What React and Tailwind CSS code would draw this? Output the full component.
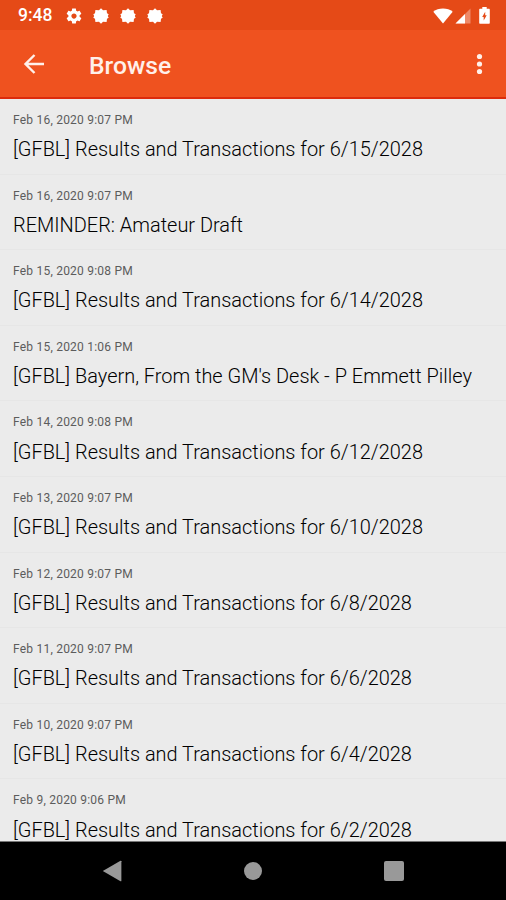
import React from 'react';

const messages = [
  { date: 'Feb 16, 2020 9:07 PM', title: '[GFBL] Results and Transactions for 6/15/2028' },
  { date: 'Feb 16, 2020 9:07 PM', title: 'REMINDER: Amateur Draft' },
  { date: 'Feb 15, 2020 9:08 PM', title: '[GFBL] Results and Transactions for 6/14/2028' },
  { date: 'Feb 15, 2020 1:06 PM', title: "[GFBL] Bayern, From the GM's Desk - P Emmett Pilley" },
  { date: 'Feb 14, 2020 9:08 PM', title: '[GFBL] Results and Transactions for 6/12/2028' },
  { date: 'Feb 13, 2020 9:07 PM', title: '[GFBL] Results and Transactions for 6/10/2028' },
  { date: 'Feb 12, 2020 9:07 PM', title: '[GFBL] Results and Transactions for 6/8/2028' },
  { date: 'Feb 11, 2020 9:07 PM', title: '[GFBL] Results and Transactions for 6/6/2028' },
  { date: 'Feb 10, 2020 9:07 PM', title: '[GFBL] Results and Transactions for 6/4/2028' },
  { date: 'Feb 9, 2020 9:06 PM', title: '[GFBL] Results and Transactions for 6/2/2028' },
];

const SettingsIcon = () => (
  <svg className="h-[18px] w-[18px]" viewBox="0 0 24 24" fill="currentColor">
    <path d="M19.43 12.98c.04-.32.07-.64.07-.98s-.03-.66-.07-.98l2.11-1.65c.19-.15.24-.42.12-.64l-2-3.46c-.12-.22-.39-.3-.61-.22l-2.49 1c-.52-.4-1.08-.73-1.69-.98l-.38-2.65C14.46 2.18 14.25 2 14 2h-4c-.25 0-.46.18-.49.42l-.38 2.65c-.61.25-1.17.59-1.69.98l-2.49-1c-.23-.09-.49 0-.61.22l-2 3.46c-.13.22-.07.49.12.64l2.11 1.65c-.04.32-.07.65-.07.98s.03.66.07.98l-2.11 1.65c-.19.15-.24.42-.12.64l2 3.46c.12.22.39.3.61.22l2.49-1c.52.4 1.08.73 1.69.98l.38 2.65c.03.24.24.42.49.42h4c.25 0 .46-.18.49-.42l.38-2.65c.61-.25 1.17-.59 1.69-.98l2.49 1c.23.09.49 0 .61-.22l2-3.46c.12-.22.07-.49-.12-.64l-2.11-1.65zM12 15.500c-1.930 0-3.500-1.570-3.500-3.500s1.570-3.500 3.500-3.500 3.500 1.570 3.500 3.500-1.570 3.500-3.500 3.500z" />
  </svg>
);

const BadgeIcon = () => (
  <svg className="h-4 w-4" viewBox="0 0 16 16" fill="currentColor">
    <path d="M8 .3l2 2 3.600-.2.400 3.200 1.700 1-.9 1.700.9 1.700-1.700 1-.4 3.200-3.600-.2-2 2-2-2-3.600.2-.4-3.200-1.700-1L1.200 8 .3 6.300l1.700-1 .4-3.200 3.600.2z" />
  </svg>
);

const StatusBar = () => (
  <div className="flex h-[30px] shrink-0 items-center justify-between bg-[#e54a17] pr-4 pl-[18px] pt-px text-white">
    <div className="flex items-center">
      <span className="w-[47px] pt-px text-[17.500px] leading-none font-medium">9:48</span>
      <SettingsIcon />
      <div className="ml-[10px] flex gap-[11px]">
        <BadgeIcon />
        <BadgeIcon />
        <BadgeIcon />
      </div>
    </div>
    <div className="flex items-center">
      <svg className="h-4 w-5" viewBox="0 0 20 16" fill="currentColor">
        <path d="M10 15.500L.3 3.700C2.800 1.600 6.200.5 10 .5s7.200 1.100 9.700 3.200z" />
      </svg>
      <svg className="ml-[2px] h-4 w-4" viewBox="0 0 16 16" fill="currentColor">
        <path d="M.5 15.500L15.500.5v15z" opacity=".35" />
        <path d="M.5 15.500L10 6v9.500z" />
      </svg>
      <svg className="ml-2 h-[17px] w-[11px]" viewBox="0 0 11 17">
        <path d="M3.300 0h4.400v1.800h2.100c.6 0 1 .4 1 1v13c0 .6-.4 1-1 1H1.200c-.6 0-1-.4-1-1v-13c0-.6.400-1 1-1h2.100z" fill="white" />
        <path d="M6.200 4.800v3.400h1.500l-3 5.300v-3.600H3.200z" fill="#e54a17" />
      </svg>
    </div>
  </div>
);

const AppBar = () => (
  <header className="flex h-[69px] shrink-0 items-center border-b-2 border-[#dc2b0c] bg-[#ef521f] pr-[16px] pl-[23px] pt-px text-[#fff0ea]">
    <svg className="h-[22px] w-[22px]" viewBox="0 0 22 22" fill="none" stroke="currentColor" strokeWidth="2.400">
      <path d="M21 11H3M11.500 2L2.500 11l9 9" />
    </svg>
    <h1 className="ml-[44px] grow pt-[5px] text-[24.700px] leading-none font-medium">Browse</h1>
    <svg className="h-[22px] w-5" viewBox="0 0 20 22" fill="currentColor">
      <circle cx="9.500" cy="3.500" r="2.600" />
      <circle cx="9.500" cy="11" r="2.600" />
      <circle cx="9.500" cy="18.500" r="2.600" />
    </svg>
  </header>
);

const MessageRow = ({ date, title }) => (
  <li className="h-[75.600px] shrink-0 border-b border-[#e6e6e6] pt-[13px] pl-[13px] whitespace-nowrap">
    <p className="text-[12px] leading-4 tracking-[0.220px] text-[#5c5c5c]">{date}</p>
    <p className="mt-[9.300px] text-[19.950px] leading-6 font-light text-black">{title}</p>
  </li>
);

const NavBar = () => (
  <nav className="flex h-[59px] shrink-0 items-center justify-between border-t border-[#777] bg-black px-[102px] text-[#999]">
    <svg className="h-[22px] w-5" viewBox="0 0 20 22" fill="currentColor">
      <path d="M.8 11L18.500.8c.4-.2.900 0 .9.500v19.400c0 .5-.5.700-.9.500z" />
    </svg>
    <span className="h-[18px] w-[18px] rounded-full bg-[#999]" />
    <span className="h-5 w-5 rounded-[2px] bg-[#999]" />
  </nav>
);

const App = () => {
  return (
    <div className="flex h-[900px] w-[506px] flex-col overflow-hidden bg-[#ebebeb] font-['Roboto',sans-serif]">
      <StatusBar />
      <AppBar />
      <ul className="flex min-h-0 grow flex-col overflow-hidden">
        {messages.map((message, index) => (
          <MessageRow key={index} date={message.date} title={message.title} />
        ))}
      </ul>
      <NavBar />
    </div>
  );
};

export default App;
